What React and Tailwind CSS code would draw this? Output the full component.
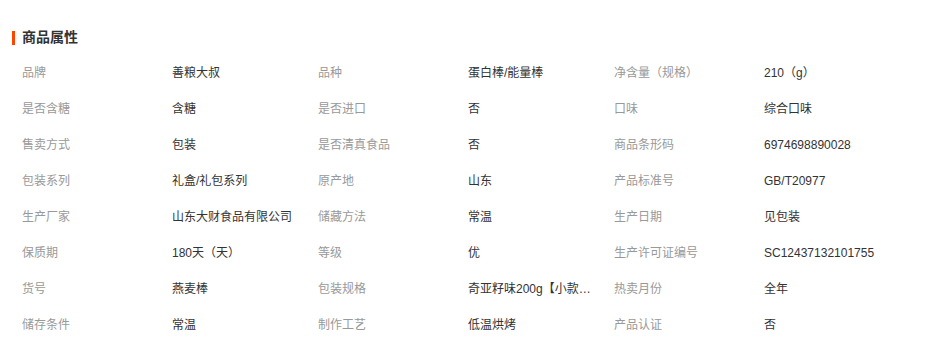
import React from "react";

const rows = [
  ["品牌", "善粮大叔", "品种", "蛋白棒/能量棒", "净含量（规格）", "210（g）"],
  ["是否含糖", "含糖", "是否进口", "否", "口味", "综合口味"],
  ["售卖方式", "包装", "是否清真食品", "否", "商品条形码", "6974698890028"],
  ["包装系列", "礼盒/礼包系列", "原产地", "山东", "产品标准号", "GB/T20977"],
  ["生产厂家", "山东大财食品有限公司", "储藏方法", "常温", "生产日期", "见包装"],
  ["保质期", "180天（天）", "等级", "优", "生产许可证编号", "SC12437132101755"],
  ["货号", "燕麦棒", "包装规格", "奇亚籽味200g【小款尝鲜装】", "热卖月份", "全年"],
  ["储存条件", "常温", "制作工艺", "低温烘烤", "产品认证", "否"],
];

const App = () => {
  return (
    <div
      className="w-[939px] h-[350px] bg-white pl-[12px] overflow-hidden"
      style={{ fontFamily: '"Liberation Sans", "Noto Sans CJK SC", sans-serif' }}
    >
      <div className="pt-[28px] mb-[9px] flex items-center h-[46px]">
        <span className="w-[3px] h-[14px] bg-[#ff4400] mr-[7px] mt-[1px]"></span>
        <h2 className="text-[14px] leading-[18px] font-bold text-[#333]">商品属性</h2>
      </div>
      <div className="pl-[10px]">
        {rows.map((r, i) => (
          <div key={i} className="flex h-[36px] items-center text-[12px]">
            {[0, 2, 4].map((j) => (
              <div key={j} className="flex w-[296px]">
                <div className="w-[150px] text-[#999] truncate">{r[j]}</div>
                <div className="w-[146px] pr-[22px] text-[#333] truncate">{r[j + 1]}</div>
              </div>
            ))}
          </div>
        ))}
      </div>
    </div>
  );
};

export default App;
